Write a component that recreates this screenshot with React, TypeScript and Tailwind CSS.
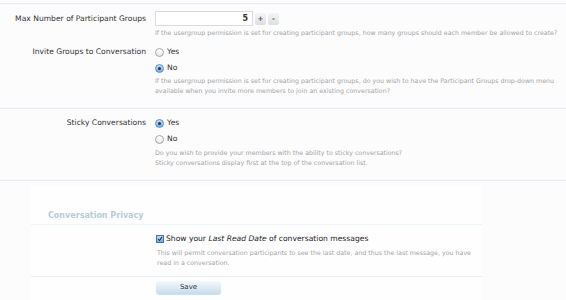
import React from "react";

const font = { fontFamily: '"DejaVu Sans", Verdana, sans-serif' };

function Radio({ checked, label }: { checked?: boolean; label: string }) {
  return (
    <label className="flex items-center gap-[3px] h-[16px] text-[7.6px] text-[#333]">
      <span
        className={
          "w-[9px] h-[9px] rounded-full border flex items-center justify-center " +
          (checked
            ? "border-[#5b8fc7] bg-gradient-to-b from-[#c4ddf6] to-[#7aaae0]"
            : "border-[#a5a5a5] bg-gradient-to-b from-[#fff] to-[#e8e8e8]")
        }
      >
        {checked && <span className="w-[3px] h-[3px] rounded-full bg-[#1d3557]" />}
      </span>
      {label}
    </label>
  );
}

function Hint({ children }: { children: React.ReactNode }) {
  return <p className="text-[6.3px] leading-[10px] text-[#a5a5a5] whitespace-nowrap">{children}</p>;
}

export default function App() {
  return (
    <div style={font} className="w-[566px] h-[300px] bg-[#fcfcfd] overflow-hidden">
      <div className="h-[3px]" />
      <div className="border-t border-[#e2edf0]">
        {/* Max groups */}
        <div className="flex pt-[7px]">
          <div className="w-[147px] pr-[1px] text-right text-[7.6px] leading-[15px] text-[#333]">
            Max Number of Participant Groups
          </div>
          <div className="pl-[8px]">
            <div className="flex items-center gap-[2px]">
              <div className="w-[98px] h-[15px] border border-[#d8dcdf] bg-white text-right pr-[4px] text-[8px] leading-[13px] text-[#333] font-bold">
                5
              </div>
              <button className="w-[11px] h-[12px] rounded-[2px] bg-gradient-to-b from-[#f4f5f6] to-[#dcdfe2] text-[7px] leading-[12px] text-[#555] font-bold">
                +
              </button>
              <button className="w-[11px] h-[12px] rounded-[2px] bg-gradient-to-b from-[#f4f5f6] to-[#dcdfe2] text-[7px] leading-[12px] text-[#555] font-bold">
                -
              </button>
            </div>
            <div className="mt-[2px]">
              <Hint>
                If the usergroup permission is set for creating participant groups, how many groups should each member be allowed to create?
              </Hint>
            </div>
          </div>
        </div>

        {/* Invite groups */}
        <div className="flex pt-[6px] pb-[12px] border-b border-[#e2edf0]">
          <div className="w-[147px] pr-[1px] text-right text-[7.6px] leading-[16px] text-[#333]">
            Invite Groups to Conversation
          </div>
          <div className="pl-[8px]">
            <Radio label="Yes" />
            <Radio checked label="No" />
            <Hint>
              If the usergroup permission is set for creating participant groups, do you wish to have the Participant Groups drop-down menu
              <br />
              available when you invite more members to join an existing conversation?
            </Hint>
          </div>
        </div>

        {/* Sticky */}
        <div className="flex pt-[6px] pb-[12px] border-b border-[#e2edf0]">
          <div className="w-[147px] pr-[1px] text-right text-[7.6px] leading-[16px] text-[#333]">
            Sticky Conversations
          </div>
          <div className="pl-[8px]">
            <Radio checked label="Yes" />
            <Radio label="No" />
            <div className="mt-[1px]">
              <Hint>
                Do you wish to provide your members with the ability to sticky conversations?
                <br />
                Sticky conversations display first at the top of the conversation list.
              </Hint>
            </div>
          </div>
        </div>

        {/* Privacy */}
        <div className="ml-[31px] w-[451px] mt-[4px] bg-[#fefeff] pt-[26px] h-[130px]">
          <h3 className="pl-[17px] text-[8px] leading-[10px] font-bold text-[#b4cddb] pb-[3px] border-b border-[#edf3f6]">
            Conversation Privacy
          </h3>
          <div className="pl-[125px] pt-[8px] pb-[8px] border-b border-[#e6f0f3]">
            <label className="flex items-center gap-[2px] h-[12px] text-[7.6px] text-[#222]">
              <span className="w-[8px] h-[8px] border border-[#4a6fa0] bg-gradient-to-b from-[#c6dcf4] to-[#7aa7d9] flex items-center justify-center">
                <svg viewBox="0 0 10 10" className="w-[8px] h-[8px]">
                  <path d="M2 5 L4.2 7.5 L8.5 1.5" stroke="#1b2d4a" strokeWidth="1.8" fill="none" />
                </svg>
              </span>
              <span>
                Show your <i>Last Read Date</i> of conversation messages
              </span>
            </label>
            <div className="mt-[3px] pl-[1px]">
              <Hint>
                This will permit conversation participants to see the last date, and thus the last message, you have
                <br />
                read in a conversation.
              </Hint>
            </div>
          </div>
          <div className="flex pl-[125px] pt-[4px]">
            <button className="w-[65px] h-[13px] rounded-[3px] bg-gradient-to-b from-[#f5f9fc] to-[#c5dced] text-[7px] leading-[13px] text-[#333] shadow-[0_1px_1px_rgba(0,0,0,0.15)]">
              Save
            </button>
          </div>
        </div>
      </div>
    </div>
  );
}
